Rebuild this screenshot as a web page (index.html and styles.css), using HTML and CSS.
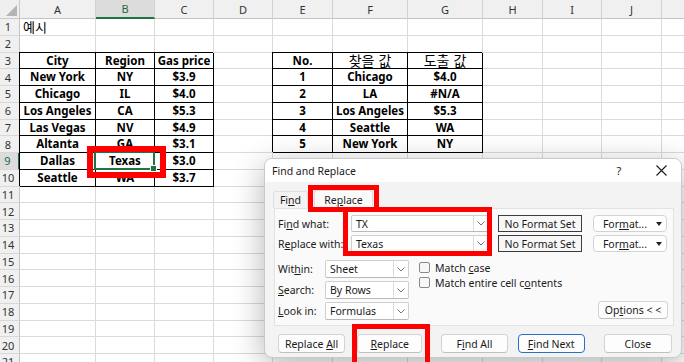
FILE: index.html
```html
<!DOCTYPE html>
<html lang="ko">
<head>
<meta charset="utf-8">
<title>Find and Replace</title>
<link rel="stylesheet" href="styles.css">
</head>
<body>
<div class="sheet">
  <div class="corner"><svg width="20" height="19" viewBox="0 0 20 19"><polygon points="17,5 17,16 6,16" fill="#b4b4b4"/></svg></div>
  <div class="ch">A</div><div class="ch sel">B</div><div class="ch">C</div><div class="ch">D</div><div class="ch">E</div><div class="ch">F</div><div class="ch">G</div><div class="ch">H</div><div class="ch">I</div><div class="ch">J</div><div class="ch"></div>

  <div class="rh">1</div><div class="c l kr">예시</div><div class="c"></div><div class="c"></div><div class="c"></div><div class="c"></div><div class="c"></div><div class="c"></div><div class="c"></div><div class="c"></div><div class="c"></div><div class="c"></div>
  <div class="rh">2</div><div class="c"></div><div class="c"></div><div class="c"></div><div class="c"></div><div class="c"></div><div class="c"></div><div class="c"></div><div class="c"></div><div class="c"></div><div class="c"></div><div class="c"></div>
  <div class="rh">3</div><div class="c t">City</div><div class="c t">Region</div><div class="c t">Gas price</div><div class="c"></div><div class="c t">No.</div><div class="c t n kr2">찾을 값</div><div class="c t n kr2">도출 값</div><div class="c"></div><div class="c"></div><div class="c"></div><div class="c"></div>
  <div class="rh">4</div><div class="c t">New York</div><div class="c t">NY</div><div class="c t">$3.9</div><div class="c"></div><div class="c t">1</div><div class="c t">Chicago</div><div class="c t">$4.0</div><div class="c"></div><div class="c"></div><div class="c"></div><div class="c"></div>
  <div class="rh">5</div><div class="c t">Chicago</div><div class="c t">IL</div><div class="c t">$4.0</div><div class="c"></div><div class="c t">2</div><div class="c t">LA</div><div class="c t">#N/A</div><div class="c"></div><div class="c"></div><div class="c"></div><div class="c"></div>
  <div class="rh">6</div><div class="c t">Los Angeles</div><div class="c t">CA</div><div class="c t">$5.3</div><div class="c"></div><div class="c t">3</div><div class="c t">Los Angeles</div><div class="c t">$5.3</div><div class="c"></div><div class="c"></div><div class="c"></div><div class="c"></div>
  <div class="rh">7</div><div class="c t">Las Vegas</div><div class="c t">NV</div><div class="c t">$4.9</div><div class="c"></div><div class="c t">4</div><div class="c t">Seattle</div><div class="c t">WA</div><div class="c"></div><div class="c"></div><div class="c"></div><div class="c"></div>
  <div class="rh">8</div><div class="c t">Altanta</div><div class="c t">GA</div><div class="c t">$3.1</div><div class="c"></div><div class="c t">5</div><div class="c t">New York</div><div class="c t">NY</div><div class="c"></div><div class="c"></div><div class="c"></div><div class="c"></div>
  <div class="rh sel">9</div><div class="c t">Dallas</div><div class="c t active">Texas<span class="selbox"><span class="handle"></span></span></div><div class="c t">$3.0</div><div class="c"></div><div class="c"></div><div class="c"></div><div class="c"></div><div class="c"></div><div class="c"></div><div class="c"></div><div class="c"></div>
  <div class="rh">10</div><div class="c t">Seattle</div><div class="c t">WA</div><div class="c t">$3.7</div><div class="c"></div><div class="c"></div><div class="c"></div><div class="c"></div><div class="c"></div><div class="c"></div><div class="c"></div><div class="c"></div>
  <div class="rh">11</div><div class="c"></div><div class="c"></div><div class="c"></div><div class="c"></div><div class="c"></div><div class="c"></div><div class="c"></div><div class="c"></div><div class="c"></div><div class="c"></div><div class="c"></div>
  <div class="rh">12</div><div class="c"></div><div class="c"></div><div class="c"></div><div class="c"></div><div class="c"></div><div class="c"></div><div class="c"></div><div class="c"></div><div class="c"></div><div class="c"></div><div class="c"></div>
  <div class="rh">13</div><div class="c"></div><div class="c"></div><div class="c"></div><div class="c"></div><div class="c"></div><div class="c"></div><div class="c"></div><div class="c"></div><div class="c"></div><div class="c"></div><div class="c"></div>
  <div class="rh">14</div><div class="c"></div><div class="c"></div><div class="c"></div><div class="c"></div><div class="c"></div><div class="c"></div><div class="c"></div><div class="c"></div><div class="c"></div><div class="c"></div><div class="c"></div>
  <div class="rh">15</div><div class="c"></div><div class="c"></div><div class="c"></div><div class="c"></div><div class="c"></div><div class="c"></div><div class="c"></div><div class="c"></div><div class="c"></div><div class="c"></div><div class="c"></div>
  <div class="rh">16</div><div class="c"></div><div class="c"></div><div class="c"></div><div class="c"></div><div class="c"></div><div class="c"></div><div class="c"></div><div class="c"></div><div class="c"></div><div class="c"></div><div class="c"></div>
  <div class="rh">17</div><div class="c"></div><div class="c"></div><div class="c"></div><div class="c"></div><div class="c"></div><div class="c"></div><div class="c"></div><div class="c"></div><div class="c"></div><div class="c"></div><div class="c"></div>
  <div class="rh">18</div><div class="c"></div><div class="c"></div><div class="c"></div><div class="c"></div><div class="c"></div><div class="c"></div><div class="c"></div><div class="c"></div><div class="c"></div><div class="c"></div><div class="c"></div>
  <div class="rh">19</div><div class="c"></div><div class="c"></div><div class="c"></div><div class="c"></div><div class="c"></div><div class="c"></div><div class="c"></div><div class="c"></div><div class="c"></div><div class="c"></div><div class="c"></div>
  <div class="rh">20</div><div class="c"></div><div class="c"></div><div class="c"></div><div class="c"></div><div class="c"></div><div class="c"></div><div class="c"></div><div class="c"></div><div class="c"></div><div class="c"></div><div class="c"></div>
  <div class="rh">21</div><div class="c"></div><div class="c"></div><div class="c"></div><div class="c"></div><div class="c"></div><div class="c"></div><div class="c"></div><div class="c"></div><div class="c"></div><div class="c"></div><div class="c"></div>
</div>

<div class="mark mark-cell"></div>

<div class="dlg">
  <div class="dlg-title">
    <span class="ttl">Find and Replace</span>
    <span class="help">?</span>
    <span class="close-x"><svg width="11" height="11" viewBox="0 0 11 11"><path d="M0.5 0.5L10.5 10.5M10.5 0.5L0.5 10.5" stroke="#1a1a1a" stroke-width="1.1" fill="none"/></svg></span>
  </div>
  <div class="dlg-body">
    <div class="tabs">
      <div class="tab"><span>Fi<u>n</u>d</span></div>
      <div class="tab on"><span>Re<u>p</u>lace</span></div>
    </div>
    <div class="panel">
      <div class="frow">
        <span class="lbl w73">Fi<u>n</u>d what:</span>
        <div class="combo wide"><span class="val">TX</span><span class="chev"><svg width="8" height="5" viewBox="0 0 8 5"><path d="M0.5 0.5L4 4L7.5 0.5" stroke="#777" fill="none"/></svg></span></div>
        <div class="nofmt">No Format Set</div>
        <div class="fmt"><span>For<u>m</u>at...</span><span class="caret"><svg width="6" height="4" viewBox="0 0 6 4"><polygon points="0,0 6,0 3,4" fill="#222"/></svg></span></div>
      </div>
      <div class="frow">
        <span class="lbl w73">R<u>e</u>place with:</span>
        <div class="combo wide"><span class="val">Texas</span><span class="chev"><svg width="8" height="5" viewBox="0 0 8 5"><path d="M0.5 0.5L4 4L7.5 0.5" stroke="#777" fill="none"/></svg></span></div>
        <div class="nofmt">No Format Set</div>
        <div class="fmt"><span>For<u>m</u>at...</span><span class="caret"><svg width="6" height="4" viewBox="0 0 6 4"><polygon points="0,0 6,0 3,4" fill="#222"/></svg></span></div>
      </div>
      <div class="opts">
        <div class="sels">
          <div class="srow"><span class="lbl w47">Wit<u>h</u>in:</span><div class="combo small"><span class="val">Sheet</span><span class="chev"><svg width="8" height="5" viewBox="0 0 8 5"><path d="M0.5 0.5L4 4L7.5 0.5" stroke="#777" fill="none"/></svg></span></div></div>
          <div class="srow"><span class="lbl w47"><u>S</u>earch:</span><div class="combo small"><span class="val">By Rows</span><span class="chev"><svg width="8" height="5" viewBox="0 0 8 5"><path d="M0.5 0.5L4 4L7.5 0.5" stroke="#777" fill="none"/></svg></span></div></div>
          <div class="srow"><span class="lbl w47"><u>L</u>ook in:</span><div class="combo small"><span class="val">Formulas</span><span class="chev"><svg width="8" height="5" viewBox="0 0 8 5"><path d="M0.5 0.5L4 4L7.5 0.5" stroke="#777" fill="none"/></svg></span></div></div>
        </div>
        <div class="checks">
          <div class="chk"><span class="box"></span><span>Match <u>c</u>ase</span></div>
          <div class="chk"><span class="box"></span><span>Match entire cell c<u>o</u>ntents</span></div>
        </div>
        <div class="btn optbtn"><span>Op<u>t</u>ions &lt; &lt;</span></div>
      </div>
    </div>
    <div class="btns">
      <div class="btn b-all"><span>Replace <u>A</u>ll</span></div>
      <div class="btn b-rep"><span><u>R</u>eplace</span></div>
      <div class="btn b-fall"><span>F<u>i</u>nd All</span></div>
      <div class="btn b-next"><span><u>F</u>ind Next</span></div>
      <div class="btn b-close"><span>Close</span></div>
    </div>
  </div>
</div>

<div class="mark mark-tab"></div>
<div class="mark mark-fields"></div>
<div class="mark mark-btn"></div>
</body>
</html>
```

FILE: styles.css
```css
html, body {
  margin: 0;
  padding: 0;
}
body {
  width: 684px;
  height: 362px;
  overflow: hidden;
  background: #fff;
  position: relative;
  font-family: "Noto Sans", "Noto Sans CJK KR", sans-serif;
}

/* ---------- sheet ---------- */
.sheet {
  display: grid;
  grid-template-columns: 20px 76px 59px 59px 59px 60px 75px 75px 60px 59px 60px 60px;
  grid-template-rows: 19px;
  grid-auto-rows: 16.75px;
  font-size: 11.5px;
  color: #000;
}
.corner {
  background: #efefef;
  border-right: 1px solid #c8c8c8;
  border-bottom: 1px solid #c8c8c8;
  box-sizing: border-box;
  overflow: hidden;
}
.corner svg { display: block; }
.ch {
  background: #f0f0f0;
  border-right: 1px solid #d2d2d2;
  border-bottom: 1px solid #c4c4c4;
  box-sizing: border-box;
  display: flex;
  align-items: center;
  justify-content: center;
  font-size: 11px;
  color: #333;
}
.ch.sel {
  background: #dcdcdc;
  color: #1d6b40;
  border-bottom: 2px solid #217346;
}
.rh {
  background: #f0f0f0;
  border-right: 1px solid #c4c4c4;
  border-bottom: 1px solid #d8d8d8;
  box-sizing: border-box;
  display: flex;
  align-items: center;
  justify-content: center;
  padding-right: 3px;
  font-size: 11px;
  color: #333;
}
.rh.sel {
  background: #dcdcdc;
  color: #1d6b40;
  border-right: 2px solid #217346;
}
.c {
  border-right: 1px solid #dadada;
  border-bottom: 1px solid #dadada;
  box-sizing: border-box;
  display: flex;
  align-items: center;
  justify-content: center;
  white-space: nowrap;
  overflow: visible;
  line-height: 1;
}
.c.l {
  justify-content: flex-start;
  padding-left: 3px;
}
.kr {
  font-family: "Noto Sans CJK KR", sans-serif;
  font-size: 13px;
}
.kr2 {
  font-family: "Noto Sans CJK KR", sans-serif;
  font-size: 14px;
}
.c.t {
  border-right-color: #000;
  border-bottom-color: #000;
  box-shadow: -1px -1px 0 #000;
  font-weight: 700;
}
.c.t.n { font-weight: 400; }
.active { position: relative; }
.selbox {
  position: absolute;
  left: -2px;
  top: -2px;
  right: -1px;
  bottom: -1px;
  border: 2px solid #217346;
}
.handle {
  position: absolute;
  right: -4px;
  bottom: -4px;
  width: 5px;
  height: 5px;
  background: #217346;
  border: 1px solid #fff;
}

/* ---------- annotation marks ---------- */
.mark {
  position: absolute;
  border: 5px solid #ff0000;
  box-sizing: border-box;
  z-index: 5;
}
.mark-cell { left: 87px; top: 146px; width: 79px; height: 32px; border-width: 6px; }
.mark-tab { left: 308px; top: 185px; width: 71px; height: 27px; }
.mark-fields { left: 343px; top: 207px; width: 149px; height: 49px; }
.mark-btn { left: 352px; top: 324px; width: 78px; height: 44px; }

/* ---------- dialog ---------- */
.dlg {
  position: absolute;
  left: 264px;
  top: 158px;
  width: 418px;
  height: 200px;
  box-sizing: border-box;
  border: 1px solid #c9c9c9;
  border-radius: 8px;
  background: #f3f3f3;
  box-shadow: 0 8px 32px rgba(0, 0, 0, 0.3);
  overflow: hidden;
  font-size: 10.5px;
  color: #1a1a1a;
  z-index: 3;
}
.dlg u { text-decoration: underline; text-underline-offset: 1px; }
.dlg-title {
  height: 23px;
  background: #fff;
  display: flex;
  align-items: center;
  padding-left: 7px;
}
.ttl { flex: 1; font-size: 10.5px; }
.help { width: 14px; text-align: center; margin-right: 30px; font-size: 11px; }
.close-x { width: 11px; height: 11px; margin-right: 14px; }
.close-x svg { display: block; }

.dlg-body { padding: 8px 9px 0 8px; }
.tabs {
  display: flex;
  align-items: flex-end;
  gap: 6px;
  height: 18px;
}
.tab {
  height: 17px;
  box-sizing: border-box;
  display: flex;
  align-items: center;
  justify-content: center;
  border: 1px solid #dedede;
  border-bottom: none;
  border-radius: 3px 3px 0 0;
  background: #f3f3f3;
  width: 35px;
}
.tab.on {
  width: 59px;
  height: 19px;
  background: #fafafa;
  margin-bottom: -1px;
  position: relative;
  z-index: 1;
}
.panel {
  margin-left: 1px;
  width: 400px;
  height: 118px;
  box-sizing: border-box;
  border: 1px solid #e2e2e2;
  background: #fafafa;
  padding: 6px 5px 0 3px;
}
.frow {
  display: flex;
  align-items: center;
  height: 17px;
  margin-bottom: 3px;
}
.lbl { white-space: nowrap; }
.w73 { width: 73px; }
.w47 { width: 47px; }
.combo {
  height: 17px;
  box-sizing: border-box;
  background: #fff;
  border: 1px solid #cfcfcf;
  border-bottom-color: #b9b9b9;
  border-radius: 2px;
  display: flex;
  align-items: center;
}
.combo .val { flex: 1; padding-left: 4px; white-space: nowrap; }
.combo .chev {
  width: 14px;
  height: 100%;
  border-left: 1px solid #dcdcdc;
  display: flex;
  align-items: center;
  justify-content: center;
}
.combo .chev svg { display: block; }
.combo.wide { width: 138px; }
.combo.small { width: 84px; height: 18px; }
.nofmt {
  margin-left: 9px;
  width: 84px;
  height: 17px;
  box-sizing: border-box;
  border: 1px solid #3c3c3c;
  background: #f7f7f7;
  display: flex;
  align-items: center;
  justify-content: center;
  white-space: nowrap;
}
.fmt {
  margin-left: 11px;
  width: 74px;
  height: 17px;
  box-sizing: border-box;
  border: 1px solid #d3d3d3;
  border-radius: 4px;
  background: #fff;
  display: flex;
  align-items: center;
  justify-content: flex-end;
  gap: 9px;
  padding-right: 4px;
}
.caret svg { display: block; }
.opts {
  display: flex;
  margin-top: 8px;
}
.sels { display: flex; flex-direction: column; gap: 3px; }
.srow { display: flex; align-items: center; height: 18px; }
.checks {
  margin-left: 10px;
  display: flex;
  flex-direction: column;
}
.chk {
  display: flex;
  align-items: center;
  height: 15px;
  white-space: nowrap;
}
.chk .box {
  width: 11px;
  height: 11px;
  box-sizing: border-box;
  border: 1px solid #8a8a8a;
  border-radius: 2px;
  background: #f7f7f7;
  margin-right: 5px;
}
.btn {
  height: 19px;
  box-sizing: border-box;
  border: 1px solid #d3d3d3;
  border-bottom-color: #c0c0c0;
  border-radius: 4px;
  background: #fdfdfd;
  display: flex;
  align-items: center;
  justify-content: center;
  white-space: nowrap;
}
.optbtn {
  margin-left: auto;
  align-self: flex-end;
  width: 70px;
  height: 18px;
  margin-bottom: 1px;
}
.btns {
  display: flex;
  margin-top: 8px;
}
.b-all { margin-left: 5px; width: 68px; }
.b-rep { margin-left: 12px; width: 66px; }
.b-fall { margin-left: 19px; width: 67px; }
.b-next { margin-left: 10px; width: 68px; border: 1px solid #2a6fc2; }
.b-close { margin-left: 19px; width: 69px; }
```
